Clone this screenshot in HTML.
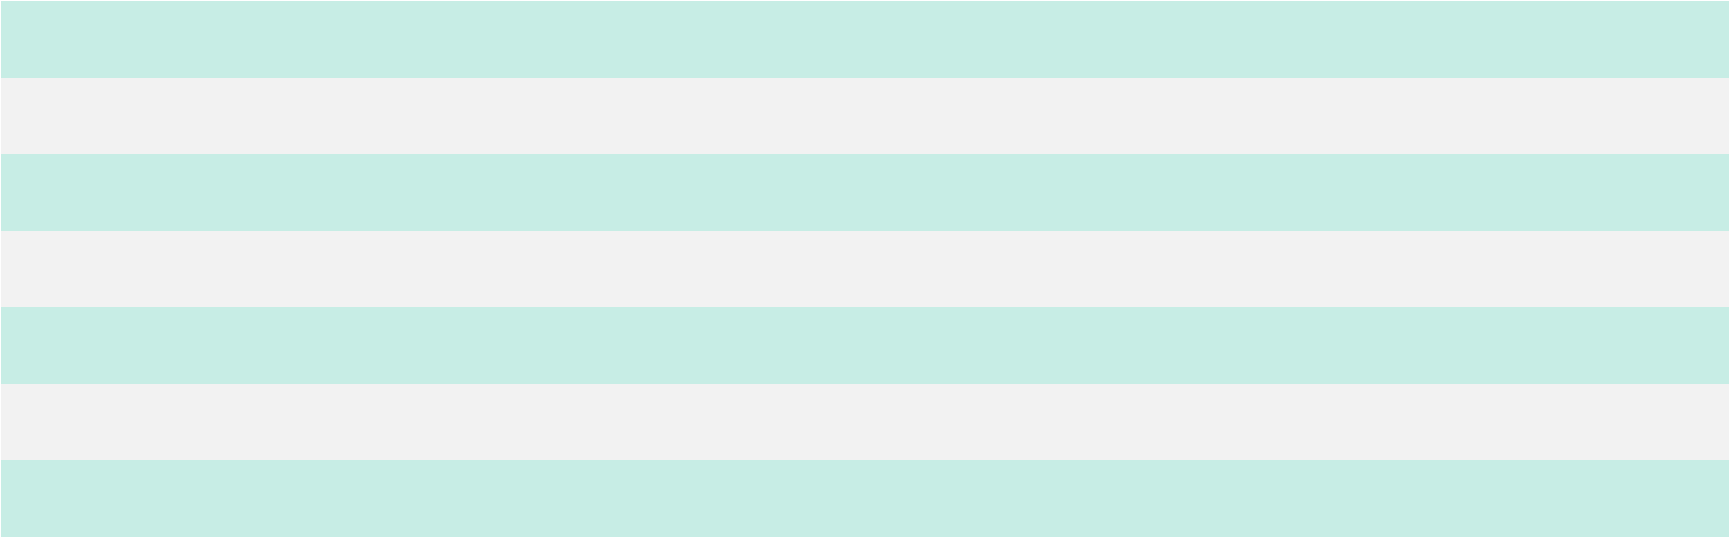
<!DOCTYPE html>
<html><head><style>
html,body{margin:0;padding:0;background:#fff;width:1730px;height:538px;overflow:hidden}
.w{position:absolute;left:1px;top:1px;width:1728px;height:536px}
.s{height:76.57px}
.a{background:#c7ede5}.b{background:#f2f2f2}
</style></head><body><div class="w">
<div class="s a"></div><div class="s b"></div><div class="s a"></div><div class="s b"></div><div class="s a"></div><div class="s b"></div><div class="s a"></div>
</div></body></html>
